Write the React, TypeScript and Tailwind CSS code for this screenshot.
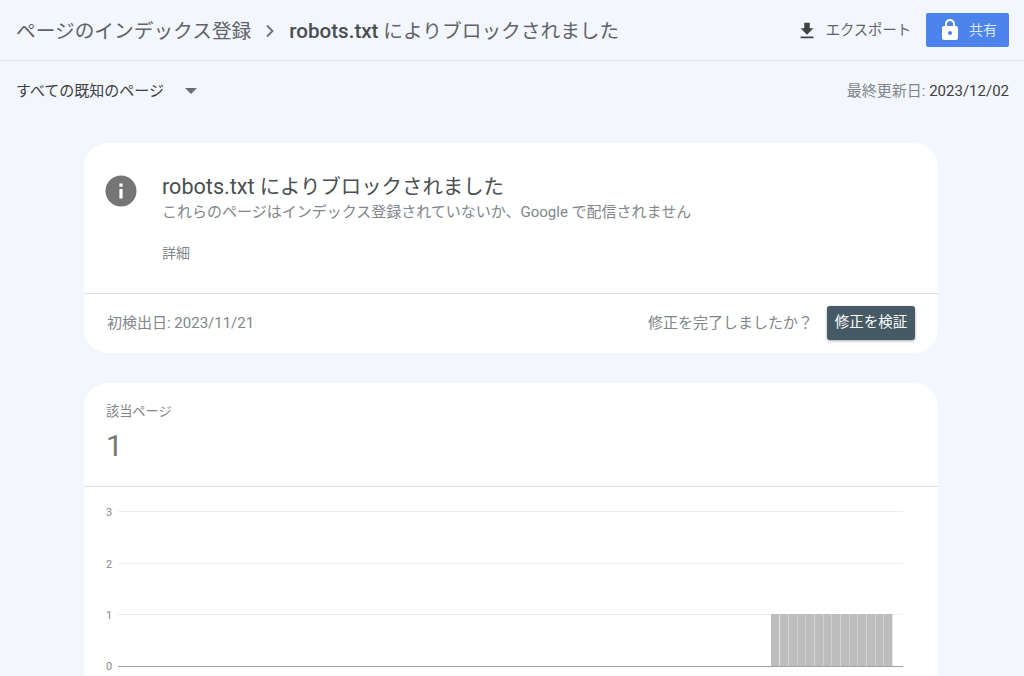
const gridRows = [
  { label: '3', y: 0 },
  { label: '2', y: 52 },
  { label: '1', y: 103 },
];

const barXs = [771, 780, 788.6, 797.3, 806, 814.6, 823.3, 832, 840.6, 849.3, 858, 866.6, 875.3, 884];

function InfoIcon() {
  return (
    <svg width="32" height="32" viewBox="0 0 32 32" className="shrink-0">
      <circle cx="16" cy="16" r="15.5" fill="#757575" />
      <rect x="14.4" y="8.5" width="3.2" height="3.2" fill="#fff" />
      <rect x="14.4" y="14" width="3.2" height="9.5" fill="#fff" />
    </svg>
  );
}

function Chart() {
  return (
    <svg width="854" height="190" viewBox="0 0 854 190" className="block">
      {gridRows.map((row) => (
        <g key={row.label}>
          <text x="25" y={row.y + 25 + 4} textAnchor="middle" fontSize="11" fill="#8a8a8a" fontFamily="Roboto, sans-serif">
            {row.label}
          </text>
          <line x1="34" x2="819" y1={row.y + 24.5} y2={row.y + 24.5} stroke="#eeeeee" />
        </g>
      ))}
      <text x="25" y="183" textAnchor="middle" fontSize="11" fill="#8a8a8a" fontFamily="Roboto, sans-serif">
        0
      </text>
      {barXs.map((x) => (
        <rect key={x} x={x - 84} y="127" width="8.4" height="53" fill="#bdbdbd" />
      ))}
      <line x1="34" x2="819" y1="179.5" y2="179.5" stroke="#a3a3a3" />
    </svg>
  );
}

export default function App() {
  return (
    <div className="h-[676px] w-[1024px] overflow-hidden bg-[#f3f6fd] font-['Roboto','Noto_Sans_CJK_JP',sans-serif] text-[#5f6368]">
      <header className="flex h-[61px] items-center justify-between border-b border-[#e0e3e8] pl-4 pr-[15px]">
        <div className="flex items-center pt-[3px] text-[19.7px]">
          <span className="text-[#5f6368]">ページのインデックス登録</span>
          <svg width="10" height="14" viewBox="0 0 10 14" className="mx-[14px]">
            <path d="M2 1.5 L7.5 7 L2 12.5" fill="none" stroke="#6b6f73" strokeWidth="1.8" />
          </svg>
          <span>
            <span className="text-[20.6px] font-medium text-[#4a4e52]">robots.txt</span> によりブロックされました
          </span>
        </div>
        <div className="flex items-center">
          <button className="flex items-center gap-[8px] pt-px text-[14.3px] text-[#5f6368]">
            <svg width="22" height="22" viewBox="0 0 24 24">
              <path d="M19 9h-4V3H9v6H5l7 7 7-7zM5 18v2h14v-2H5z" fill="#424242" />
            </svg>
            エクスポート
          </button>
          <button className="ml-[15px] flex h-[34px] w-[83px] items-center justify-center gap-[7px] rounded-[2px] bg-[#4d84ec] text-[14px] text-[#dbe6fb]">
            <svg width="24" height="24" viewBox="0 0 24 24">
              <path
                d="M18 8h-1V6c0-2.76-2.24-5-5-5S7 3.24 7 6v2H6c-1.1 0-2 .9-2 2v10c0 1.1.9 2 2 2h12c1.1 0 2-.9 2-2V10c0-1.1-.9-2-2-2zm-6 9c-1.1 0-2-.9-2-2s.9-2 2-2 2 .9 2 2-.9 2-2 2zm3.1-9H8.9V6c0-1.71 1.39-3.1 3.1-3.1 1.71 0 3.1 1.39 3.1 3.1v2z"
                fill="#fff"
              />
            </svg>
            共有
          </button>
        </div>
      </header>

      <div className="flex h-[60px] items-center justify-between pl-4 pr-[15px] text-[15px]">
        <div className="flex items-center text-[#3c4043]">
          すべての既知のページ
          <span className="ml-[21px] h-0 w-0 border-x-[6px] border-t-[6px] border-x-transparent border-t-[#6b6f73]" />
        </div>
        <div className="text-[#80868b]">
          最終更新日: <span className="text-[#3c4043]">2023/12/02</span>
        </div>
      </div>

      <main className="ml-[84px] mt-[22px] flex w-[854px] flex-col gap-[30px]">
        <section className="rounded-[24px] bg-white">
          <div className="flex h-[151px] items-start border-b border-[#e0e0e0] pl-[21px] pt-[32px]">
            <InfoIcon />
            <div className="ml-[25px]">
              <h2 className="text-[20.4px] leading-6 text-[#4a4e52]">
                <span className="text-[21.6px]">robots.txt</span> によりブロックされました
              </h2>
              <p className="mt-[3px] text-[15px] leading-[20px] text-[#80868b]">
                これらのページはインデックス登録されていないか、Google で配信されません
              </p>
              <p className="mt-[21px] text-[14px] leading-[20px] text-[#80868b]">詳細</p>
            </div>
          </div>
          <div className="flex h-[59px] items-center justify-between pl-[23px] pr-[23px] text-[15px] text-[#80868b]">
            <span>初検出日: 2023/11/21</span>
            <div className="flex items-center gap-[14px]">
              <span>修正を完了しましたか？</span>
              <button className="mb-[2px] h-[34px] w-[88px] rounded-[3px] bg-[#455a64] text-[14.5px] text-white shadow-[0_1px_3px_rgba(0,0,0,0.35)]">
                修正を検証
              </button>
            </div>
          </div>
        </section>

        <section className="rounded-t-[24px] bg-white">
          <div className="h-[104px] border-b border-[#e0e0e0] pl-[22px] pt-[21px]">
            <p className="text-[13.2px] leading-4 text-[#80868b]">該当ページ</p>
            <p className="mt-[8px] text-[30px] leading-[36px] text-[#757575]">1</p>
          </div>
          <Chart />
        </section>
      </main>
    </div>
  );
}
